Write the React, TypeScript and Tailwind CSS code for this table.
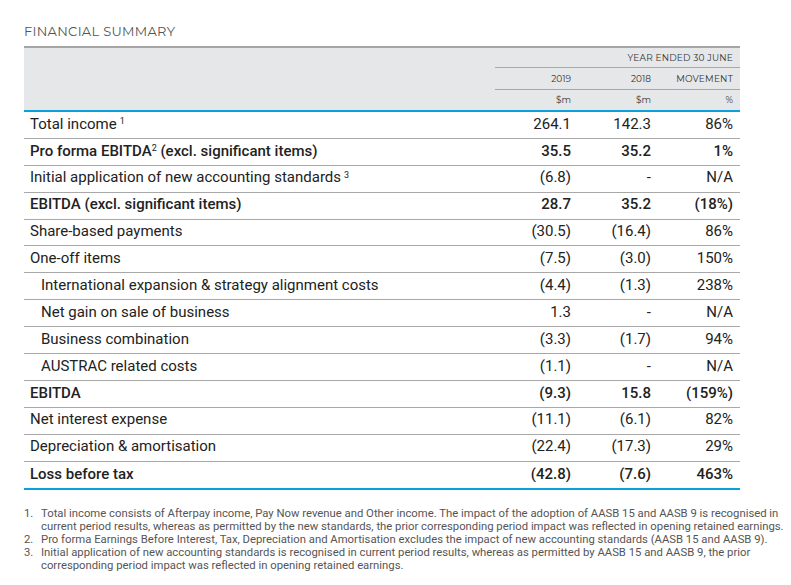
import React from "react";

type Row = {
  label: string;
  sup?: string;
  a: string;
  b: string;
  c: string;
  bold?: boolean;
  indent?: boolean;
};

const rows: Row[] = [
  { label: "Total income", sup: "1", a: "264.1", b: "142.3", c: "86%" },
  { label: "Pro forma EBITDA", sup: "2", a: "35.5", b: "35.2", c: "1%", bold: true },
  { label: "Initial application of new accounting standards", sup: "3", a: "(6.8)", b: "-", c: "N/A" },
  { label: "EBITDA (excl. significant items)", a: "28.7", b: "35.2", c: "(18%)", bold: true },
  { label: "Share-based payments", a: "(30.5)", b: "(16.4)", c: "86%" },
  { label: "One-off items", a: "(7.5)", b: "(3.0)", c: "150%" },
  { label: "International expansion & strategy alignment costs", a: "(4.4)", b: "(1.3)", c: "238%", indent: true },
  { label: "Net gain on sale of business", a: "1.3", b: "-", c: "N/A", indent: true },
  { label: "Business combination", a: "(3.3)", b: "(1.7)", c: "94%", indent: true },
  { label: "AUSTRAC related costs", a: "(1.1)", b: "-", c: "N/A", indent: true },
  { label: "EBITDA", a: "(9.3)", b: "15.8", c: "(159%)", bold: true },
  { label: "Net interest expense", a: "(11.1)", b: "(6.1)", c: "82%" },
  { label: "Depreciation & amortisation", a: "(22.4)", b: "(17.3)", c: "29%" },
  { label: "Loss before tax", a: "(42.8)", b: "(7.6)", c: "463%", bold: true },
];

const notes = [
  "Total income consists of Afterpay income, Pay Now revenue and Other income. The impact of the adoption of AASB 15 and AASB 9 is recognised in current period results, whereas as permitted by the new standards, the prior corresponding period impact was reflected in opening retained earnings.",
  "Pro forma Earnings Before Interest, Tax, Depreciation and Amortisation excludes the impact of new accounting standards (AASB 15 and AASB 9).",
  "Initial application of new accounting standards is recognised in current period results, whereas as permitted by AASB 15 and AASB 9, the prior corresponding period impact was reflected in opening retained earnings.",
];

const head = "font-['Montserrat','Lato','Liberation_Sans',sans-serif]";

function Label({ row }: { row: Row }) {
  if (row.label === "Pro forma EBITDA") {
    return (
      <span>
        Pro forma EBITDA<sup className="text-[9px] font-normal">2</sup> (excl. significant items)
      </span>
    );
  }
  return (
    <span>
      {row.label}
      {row.sup && <sup className="text-[9px] ml-[3px]">{row.sup}</sup>}
    </span>
  );
}

export default function App() {
  return (
    <div className="w-[791px] h-[585px] bg-white pl-6 pt-[22px] font-['Roboto',sans-serif]">
      <div className="w-[716px]">
        <h1 className={`${head} text-[13px] text-[#555] tracking-[0.3px] leading-[18px] pb-[6px] border-b-2 border-[#a5a5a5]`}>
          FINANCIAL SUMMARY
        </h1>

        {/* header band */}
        <div className={`${head} bg-[#e6e7e9] h-[62px] flex justify-end text-[9px] text-[#333]`}>
          <div className="w-[245px] flex flex-col">
            <div className="h-[20px] flex items-center justify-end pr-[7px] border-b border-[#a8a8a8] tracking-[0.2px]">
              YEAR ENDED 30 JUNE
            </div>
            <div className="h-[22px] grid grid-cols-[81px_82px_82px] items-center border-b border-[#a8a8a8]">
              <span className="text-right pr-[5px]">2019</span>
              <span className="text-right pr-[7px]">2018</span>
              <span className="text-right pr-[7px] tracking-[0.2px]">MOVEMENT</span>
            </div>
            <div className="flex-1 grid grid-cols-[81px_82px_82px] items-center">
              <span className="text-right pr-[5px]">$m</span>
              <span className="text-right pr-[7px]">$m</span>
              <span className="text-right pr-[7px]">%</span>
            </div>
          </div>
        </div>

        <div className="border-t-2 border-b-2 border-[#0aa0dc]">
          {rows.map((r, i) => (
            <div
              key={i}
              className={`grid grid-cols-[1fr_81px_82px_82px] h-[26.9px] items-center pb-[2px] text-[15px] text-[#222] ${
                i < rows.length - 1 ? "border-b border-[#a8a8a8]" : ""
              } ${r.bold ? "font-medium" : ""}`}
            >
              <div className={r.indent ? "pl-[17px]" : "pl-[6px]"}>
                <Label row={r} />
              </div>
              <div className="text-right pr-[5px]">{r.a}</div>
              <div className="text-right pr-[7px]">{r.b}</div>
              <div className="text-right pr-[7px]">{r.c}</div>
            </div>
          ))}
        </div>

        <ol className="mt-[17px] text-[11.3px] leading-[13px] text-[#555] w-[762px]">
          {notes.map((t, i) => (
            <li key={i} className="flex">
              <span className="w-[17px] shrink-0">{i + 1}.</span>
              <span>{t}</span>
            </li>
          ))}
        </ol>
      </div>
    </div>
  );
}
